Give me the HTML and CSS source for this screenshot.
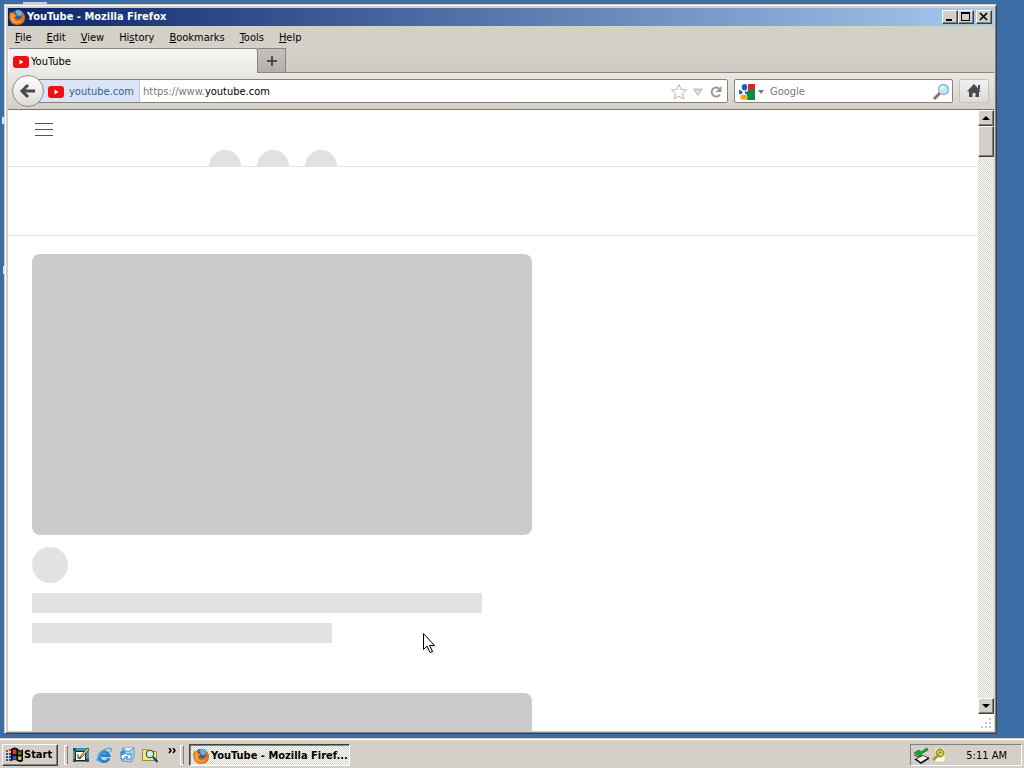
FILE: index.html
```html
<!DOCTYPE html>
<html lang="en">
<head>
<meta charset="utf-8">
<title>YouTube - Mozilla Firefox</title>
<link rel="stylesheet" href="styles.css">
</head>
<body>
<svg class="defs" aria-hidden="true">
  <symbol id="firefox" viewBox="0 0 16 16">
    <circle cx="8.5" cy="7.5" r="6.8" fill="#28639f"/>
    <path d="M7 1.500q4-1.500 6.500 2l-2 4-3-1-2-3z" fill="#75acd5"/>
    <path d="M1.500 2q.5 1.500 1.500 2 1.500-1 3-.5-1 1-.5 2l2.500.5q0 1.500-2 2 0 2.500 2.500 2.500 3 0 4.500-3 .5-3-1-5 4 2 4 6 0 7.500-8 7.500-7.500-.5-7.700-8Q.2 4.500 1.500 2z" fill="#e56f16"/>
    <path d="M2 4q1 1 2 0l1 2 2 .5-2 1.500q-.5 3.500 3 4.500 3.500.5 6-3-2 5-6.500 5-5-.5-6-5z" fill="#f7a12d"/>
  </symbol>
  <symbol id="youtube" viewBox="0 0 16 12">
    <rect width="16" height="12" rx="3" fill="#f20d12"/><path d="M6.500 3.500v5l4-2.500z" fill="#fff"/>
  </symbol>
</svg>
<div class="desktop">
  <span class="label-bit bit-top"></span><span class="label-bit bit-one"></span><span class="label-bit bit-two"></span>
  <main class="window">
    <header class="titlebar">
      <svg class="icon16"><use href="#firefox"/></svg>
      <h1 class="title">YouTube - Mozilla Firefox</h1>
      <button class="caption" aria-label="Minimize"><svg width="12" height="10"><path d="M2 7h6v2H2z"/></svg></button>
      <button class="caption" aria-label="Maximize"><svg width="12" height="10"><path d="M1 0h9v9H1zM2 2v6h7V2z" fill-rule="evenodd"/></svg></button>
      <button class="caption close" aria-label="Close"><svg width="12" height="10"><path d="M2 1l7 7M9 1L2 8" stroke="#000" stroke-width="1.700"/></svg></button>
    </header>
    <nav class="menubar">
      <button><u>F</u>ile</button><button><u>E</u>dit</button><button><u>V</u>iew</button><button>Hi<u>s</u>tory</button><button><u>B</u>ookmarks</button><button><u>T</u>ools</button><button><u>H</u>elp</button>
    </nav>
    <div class="tabs">
      <button class="tab"><svg width="16" height="12"><use href="#youtube"/></svg>YouTube</button>
      <button class="newtab" aria-label="New tab"><svg width="12" height="12"><path d="M6 1v10M1 6h10" stroke="#4d4d4d" stroke-width="2"/></svg></button>
    </div>
    <div class="toolbar">
      <button class="back" aria-label="Back"><svg width="18" height="16"><path d="M9 2L3 8l6 6M3 8h13" fill="none" stroke="#454a50" stroke-width="3"/></svg></button>
      <div class="urlbar">
        <span class="identity"><svg width="16" height="12"><use href="#youtube"/></svg>youtube.com</span>
        <label class="address"><span class="scheme">https://www.</span><input aria-label="Address" value="youtube.com"></label>
        <button class="plain star" aria-label="Bookmark"><svg width="18" height="18"><path d="M9 1.500l2.200 5 5.300.5-4 3.600 1.200 5.400L9 13.200 4.300 16l1.200-5.400-4-3.600 5.300-.5z" fill="#fff" stroke="#b4b4b4"/></svg></button>
        <button class="plain" aria-label="History"><svg width="12" height="10"><path d="M1.500 2h9L6 8.500z" fill="#d8d8d8" stroke="#bbb"/></svg></button>
        <button class="plain reload" aria-label="Reload"><svg width="14" height="14"><path d="M11 9.500A4.500 4.500 0 1 1 10 3.500" fill="none" stroke="#999" stroke-width="2"/><path d="M12.500 1v6h-6z" fill="#999"/></svg></button>
      </div>
      <div class="search">
        <svg width="16" height="16"><path d="M9 0h7v5H9z" fill="#d12825"/><path d="M9 5h7v11H8V9z" fill="#12883e"/><ellipse cx="5.500" cy="3.200" rx="2.700" ry="3.200" fill="#1e5bbb"/><path d="M0 5.500l4 2.500-2 2.500-2-1z" fill="#1e5bbb"/><path d="M6 7l3 1.500V11L6 9.500z" fill="#1e5bbb"/><ellipse cx="5" cy="13.200" rx="3.700" ry="2.600" fill="#f1aa25"/></svg>
        <svg class="drop" width="6" height="4"><path d="M0 0h6L3 4z" fill="#777"/></svg>
        <input aria-label="Search" placeholder="Google">
        <button class="plain" aria-label="Search"><svg width="18" height="18"><path d="M2 16l6-6" stroke="#8c6f5f" stroke-width="3"/><circle cx="11.500" cy="6.500" r="5" fill="#bfe9f8" stroke="#94b6cf" stroke-width="1.500"/><path d="M9 6q0-2 3-2" stroke="#fff" stroke-width="1.500" fill="none"/></svg></button>
      </div>
      <button class="home" aria-label="Home"><svg width="16" height="16"><path d="M8 1l7 7.500h-2V14H9.500v-4h-3v4H3V8.500H1z" fill="#454a50"/><path d="M12 2h2v4h-2z" fill="#454a50"/></svg></button>
    </div>
    <div class="viewport">
      <section class="page">
        <header class="masthead">
          <button class="plain burger" aria-label="Guide"><svg width="18" height="13"><path d="M0 0h18v1H0zM0 6h18v1H0zM0 12h18v1H0z" fill="#555"/></svg></button>
          <div class="dots"><i></i><i></i><i></i></div>
        </header>
        <div class="chips"></div>
        <article class="card"><div class="thumb"></div><div class="avatar"></div><div class="line"></div><div class="line short"></div></article>
        <article class="card"><div class="thumb"></div></article>
      </section>
      <aside class="side">
        <div class="scrollbar">
          <button class="arrow" aria-label="Scroll up"><svg width="8" height="4"><path d="M0 4h8L4 0z"/></svg></button>
          <div class="thumbbar"></div>
          <button class="arrow bottom" aria-label="Scroll down"><svg width="8" height="4"><path d="M0 0h8L4 4z"/></svg></button>
        </div>
        <svg class="grip" width="16" height="17"><path d="M11 4h2v2h-2zM7 8h2v2H7zM11 8h2v2h-2zM3 12h2v2H3zM7 12h2v2H7zM11 12h2v2h-2z" fill="#c8c5be"/></svg>
      </aside>
    </div>
  </main>
  <svg class="cursor" width="18" height="24"><path d="M3.500 3.500v17l4-4 3 6 2.500-1.300-3-5.700h5z" fill="#aaa" opacity=".35"/><path d="M1.500 1.500v16l3.500-3.500 3 6.500 2.500-1-3-6h5z" fill="#fff" stroke="#000"/></svg>
</div>
<footer class="taskbar">
  <button class="start"><svg width="17" height="16"><path d="M0 3h2v2H0zM3 2h2v2H3z" fill="#c3342d"/><path d="M0 6h2v2H0zM0 9h2v2H0zM0 12h2v2H0zM3 6h2v2H3zM3 9h2v2H3zM3 12h2v2H3z" fill="#3448a8"/><path d="M5 2q4-3 7 0t5 0v12q-3 2-5.500 0T5 14z"/><path d="M6.500 3q3-1.500 4 .5v4q-2-1-4 0z" fill="#d63a2d"/><path d="M12 4q2 1 3.500 0v3.500q-1.500 1-3.500 0z" fill="#2c8b2e"/><path d="M6.500 9q2-1 4 0v4q-2-1-4 0z" fill="#3153c4"/><path d="M12 9q2 1 3.500 0v3.500q-2 1-3.500 0z" fill="#e0c32c"/></svg>Start</button>
  <span class="handle"></span>
  <div class="quick">
    <button class="plain" aria-label="Show Desktop"><svg width="17" height="16"><path d="M0 1h16v14H0z" fill="#4690a8"/><path d="M0 1h3v3H0zM0 12h3v3H0zM13 12h3v3h-3z" fill="#19546e"/><path d="M2.500 4.500h10v9h-10z" fill="#fffce8" stroke="#222"/><path d="M7 10l7-9 2 1.500L9 10l-3 2z" fill="#f5d36b" stroke="#333" stroke-width=".8"/><path d="M5 7v4h3" fill="none" stroke="#333"/></svg></button>
    <button class="plain" aria-label="Internet Explorer"><svg width="17" height="16"><path d="M13 11A5 5 0 1 1 13 8.500H5" fill="none" stroke="#2684cf" stroke-width="3"/><path d="M3 14Q-1 14 4 7t11-5.500q1 1-1 3.500" fill="none" stroke="#51acdf" stroke-width="1.500"/></svg></button>
    <button class="plain" aria-label="Outlook Express"><svg width="17" height="16"><path d="M4 1h11v9l-3 5-9-1-1-6z" fill="#a7d3f5" stroke="#5a9bd2"/><path d="M4 1l5 4 6-4" fill="#e5f5ff" stroke="#4c91c5"/><path d="M2 12V8q5-3 8 0l2-2v6H7l2-2q-3-2-4 2z" fill="#fff" stroke="#3280c4"/><path d="M1 5l4-2 2 2-5 3z" fill="#3a8bd1"/></svg></button>
    <button class="plain" aria-label="Search files"><svg width="17" height="16"><path d="M.5 2.500h5l1 2h8v9H.5z" fill="#f4e58a" stroke="#9b8f3d"/><circle cx="8" cy="7" r="3.800" fill="#c8f1f4" stroke="#333"/><path d="M11 10l4.500 5" stroke="#173c79" stroke-width="2"/></svg></button>
  </div>
  <button class="plain more" aria-label="More"><svg width="8" height="6"><path d="M1 0l2 2.500L1 5M5 0l2 2.500L5 5" fill="none" stroke="#000" stroke-width="1.500"/></svg></button>
  <span class="handle"></span>
  <button class="task"><svg class="icon16"><use href="#firefox"/></svg><span>YouTube - Mozilla Firef...</span></button>
  <div class="tray">
    <svg width="17" height="17"><path d="M3 12l6-4 7 3-8 5z" fill="#eee" stroke="#444"/><path d="M2 12l6 4 8-5" fill="none" stroke="#111" stroke-width="1.500"/><path d="M1 8l5 2 3-1" fill="none" stroke="#333"/><path d="M14 1L8 5 6 3 1 6l6 3 1-2 7-4z" fill="#19a52c" stroke="#08701a" stroke-width=".7"/></svg>
    <svg width="16" height="16"><path d="M4 1h8l2 2v12H4z" fill="#fffde8" stroke="#d5d29b"/><circle cx="9" cy="6" r="3.500" fill="#f6f28b" stroke="#99992a" stroke-width="1.800"/><path d="M6.500 9L2 13" stroke="#99992a" stroke-width="2.500"/><path d="M8 8V5h2v2" fill="none" stroke="#77771a"/></svg>
    <time>5:11 AM</time>
  </div>
</footer>
</body>
</html>
```
FILE: styles.css
```css
* { box-sizing: border-box; }
body { margin: 0; height: 100vh; display: flex; flex-direction: column; overflow: hidden; background: #3a6ea5; color: #000; font: 11px/14px Tahoma, "DejaVu Sans Condensed", sans-serif; }
button, input { font: inherit; color: inherit; }
button { margin: 0; padding: 0; border: 0; background: none; }
svg { display: block; flex: none; }
.defs { position: absolute; width: 0; height: 0; }
.icon16 { width: 16px; height: 16px; }
.plain { display: flex; align-items: center; justify-content: center; }
.desktop { position: relative; flex: 1; min-height: 0; display: flex; padding: 4px 27px 4px 4px; }
.label-bit { position: absolute; background: #dfe6ef; }
.bit-top { left: 23px; top: 2px; width: 24px; height: 2px; background: #c9cfe8; }
.bit-one { left: 2px; top: 117px; width: 2px; height: 7px; }
.bit-two { left: 3px; top: 266px; width: 2px; height: 8px; }
.window { flex: 1; min-width: 0; display: flex; flex-direction: column; padding: 3px 2px 2px 3px; background: #d4d0c8; border: 1px solid #404040; border-top-color: #d4d0c8; border-left-color: #d4d0c8; box-shadow: inset 1px 1px #fff, inset -1px -1px #808080; }
.titlebar { display: flex; align-items: center; height: 18px; padding: 0 2px 0 1px; background: linear-gradient(90deg, #0a246a, #a6caf0); color: #fff; }
.title { flex: 1; margin: 0 0 0 2px; font-size: 11px; line-height: 14px; }
.caption, .start, .arrow, .thumbbar { background: #d4d0c8; border: 1px solid #404040; border-top-color: #fff; border-left-color: #fff; box-shadow: inset -1px -1px #808080; }
.caption { width: 16px; height: 14px; padding: 1px; }
.close { margin-left: 2px; }
.menubar { display: flex; gap: 15px; height: 22px; padding: 1px 7px 0; align-items: center; }
.tabs { display: flex; height: 25px; border-bottom: 1px solid #88857e; background: linear-gradient(#d4d0c8, #cfcbc3); }
.tab { display: flex; align-items: center; gap: 2px; width: 250px; height: 26px; padding: 1px 4px 0; border: 1px solid #88857e; border-bottom: 0; border-radius: 3px 3px 0 0; border-left-color: #fff; background: linear-gradient(#f6f5f3, #eae8e4); }
.newtab { display: flex; align-items: center; justify-content: center; width: 28px; border: 1px solid #88857e; border-bottom: 0; border-left: 0; background: linear-gradient(#c5c1ba, #b3b0aa); }
.toolbar { display: flex; align-items: center; height: 37px; padding: 0 5px 0 4px; border-bottom: 1px solid #77746e; background: linear-gradient(#eae8e4, #d4d0c8); }
.back { z-index: 1; display: flex; align-items: center; justify-content: center; width: 32px; height: 32px; border: 1px solid #918e88; border-radius: 50%; background: linear-gradient(#fff, #dedbd6); }
.urlbar, .search { display: flex; align-items: center; height: 24px; padding-top: 1px; border: 1px solid #85827c; border-radius: 2px; background: #fff; }
.urlbar { flex: 1; min-width: 0; margin: 0 6px 0 -8px; padding-right: 4px; }
.identity { display: flex; align-items: center; align-self: stretch; gap: 5px; margin-top: -1px; padding: 1px 5px 0 11px; border-right: 1px solid #bacce6; background: #d9e4f5; color: #386087; }
.address { flex: 1; display: flex; align-items: center; min-width: 0; padding-left: 3px; }
.scheme { color: #777; }
input { flex: 1; min-width: 0; height: 14px; padding: 0; border: 0; outline: 0; background: transparent; }
.star { margin-right: 4px; }
.reload { margin-left: 5px; }
.search { width: 219px; padding-left: 4px; padding-right: 2px; }
.drop { margin: 0 6px 0 3px; }
.search input::placeholder { color: #777; opacity: 1; }
.home { display: flex; align-items: center; justify-content: center; width: 30px; height: 24px; margin-left: 6px; border: 1px solid #c7c3bc; border-radius: 2px; background: linear-gradient(#f1f0ee, #dedbd6); }
.viewport { flex: 1; min-height: 0; display: flex; background: #fff; }
.page { flex: 1; min-width: 0; overflow: hidden; }
.masthead { height: 57px; padding: 13px 27px 0; border-bottom: 1px solid #e2e2e2; overflow: hidden; }
.burger { height: 13px; }
.dots { display: flex; gap: 16px; margin: 14px 0 0 174px; }
.dots i { width: 32px; height: 32px; border-radius: 50%; background: #e2e2e2; }
.chips { height: 69px; border-bottom: 1px solid #e5e5e5; }
.card { width: 500px; max-width: 90%; margin: 18px 0 50px 24px; }
.thumb { height: 281px; border-radius: 8px; background: #cbcbcb; }
.avatar { width: 36px; height: 36px; margin: 12px 0 10px; border-radius: 50%; background: #e2e2e2; }
.line { width: 90%; height: 20px; margin-bottom: 10px; background: #e2e2e2; }
.short { width: 60%; margin-bottom: 0; }
.side { display: flex; flex-direction: column; width: 16px; }
.scrollbar { flex: 1; display: flex; flex-direction: column; background: repeating-conic-gradient(#fff 0 25%, #d4d0c8 0 50%) 0 0 / 2px 2px; }
.arrow { display: flex; align-items: center; justify-content: center; height: 16px; }
.thumbbar { height: 31px; }
.bottom { margin-top: auto; }
.cursor { position: absolute; left: 422px; top: 632px; }
.taskbar { display: flex; align-items: center; height: 30px; padding: 3px 2px 0; border-top: 1px solid #d4d0c8; box-shadow: inset 0 1px #fff; background: #d4d0c8; }
.start { display: flex; align-items: center; gap: 1px; height: 22px; width: 56px; padding: 0 3px; font-weight: bold; }
.handle { width: 4px; height: 20px; margin: 0 4px 0 6px; border: 1px solid #fff; border-right-color: #808080; }
.quick { display: flex; gap: 6px; padding-left: 1px; }
.more { height: 18px; margin-left: 9px; align-items: flex-start; padding-top: 2px; }
.more + .handle { margin: 0 5px 0 4px; }
.task { display: flex; align-items: center; gap: 2px; width: 161px; height: 22px; padding: 1px 2px 0 3px; border: 1px solid #fff; border-top-color: #404040; border-left-color: #404040; box-shadow: inset 1px 1px #808080; background: repeating-conic-gradient(#fff 0 25%, #d4d0c8 0 50%) 0 0 / 2px 2px; font-weight: bold; white-space: nowrap; }
.tray { display: flex; align-items: center; gap: 1px; width: 112px; height: 22px; margin-left: auto; padding: 0 14px 0 2px; border: 1px solid #fff; border-top-color: #808080; border-left-color: #808080; }
.tray time { margin-left: auto; padding-top: 1px; }
```
